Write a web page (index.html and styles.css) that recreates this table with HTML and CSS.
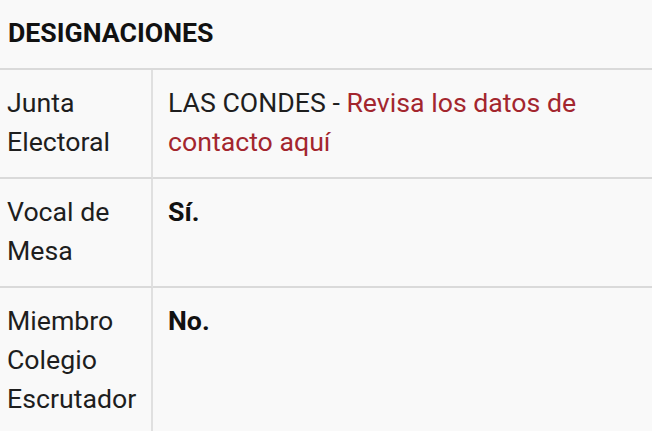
FILE: index.html
```html
<!DOCTYPE html>
<html lang="es">
<head>
<meta charset="utf-8">
<title>Designaciones</title>
<link rel="stylesheet" href="styles.css">
</head>
<body>
<section class="panel">
  <h2 class="panel-title">DESIGNACIONES</h2>
  <div class="grid">
    <div class="label">Junta Electoral</div>
    <div class="value">LAS CONDES - <a class="link" href="#">Revisa los datos de contacto aquí</a></div>
    <div class="label">Vocal de Mesa</div>
    <div class="value"><strong>Sí.</strong></div>
    <div class="label">Miembro Colegio Escrutador</div>
    <div class="value"><strong>No.</strong></div>
  </div>
</section>
</body>
</html>
```

FILE: styles.css
```css
html, body {
  margin: 0;
  padding: 0;
  background: #f9f9f9;
}
body {
  font-family: Roboto, "Noto Sans", sans-serif;
  color: #1e1e1e;
  font-size: 26.7px;
  line-height: 39px;
  overflow: hidden;
}
.panel {
  width: 652px;
}
.panel-title {
  margin: 0;
  padding: 14px 8px 15px;
  font-size: 26.7px;
  font-weight: 700;
  line-height: 39px;
  color: #111;
  border-bottom: 2px solid #dadada;
}
.grid {
  display: grid;
  grid-template-columns: 153px 1fr;
}
.label {
  padding: 14px 8px 15px 7px;
  border-right: 2px solid #e0e0e0;
  border-bottom: 2px solid #dadada;
}
.value {
  padding: 14px 14px 15px 15px;
  border-bottom: 2px solid #dadada;
}
.link {
  color: #a3262e;
  text-decoration: none;
}
.value strong {
  font-weight: 700;
  color: #111;
}
```
